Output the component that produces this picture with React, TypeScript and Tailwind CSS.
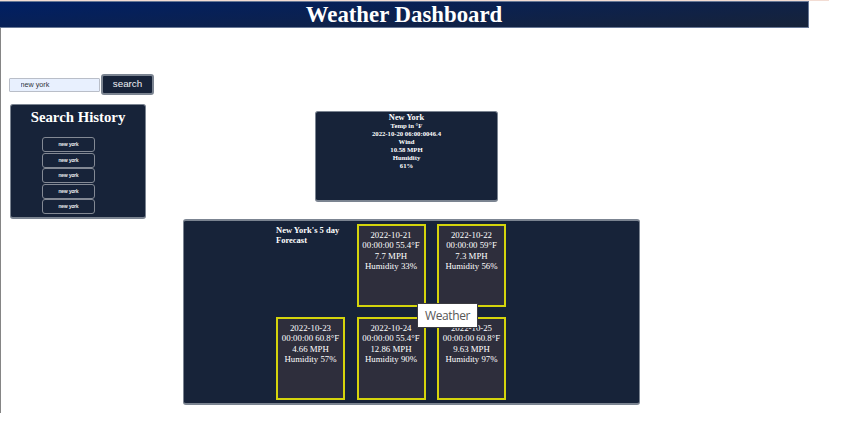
const history = ["new york", "new york", "new york", "new york", "new york"];

const current = [
  "Temp in °F",
  "2022-10-20 06:00:0046.4",
  "Wind",
  "10.58 MPH",
  "Humidity",
  "61%",
];

const forecast = [
  { date: "2022-10-21", temp: "00:00:00 55.4°F", wind: "7.7 MPH", humidity: "Humidity 33%" },
  { date: "2022-10-22", temp: "00:00:00 59°F", wind: "7.3 MPH", humidity: "Humidity 56%" },
  { date: "2022-10-23", temp: "00:00:00 60.8°F", wind: "4.66 MPH", humidity: "Humidity 57%" },
  { date: "2022-10-24", temp: "00:00:00 55.4°F", wind: "12.86 MPH", humidity: "Humidity 90%" },
  { date: "2022-10-25", temp: "00:00:00 60.8°F", wind: "9.63 MPH", humidity: "Humidity 97%" },
];

function SearchPanel() {
  return (
    <aside className="w-[146px] shrink-0">
      <form className="flex items-center gap-px" onSubmit={(e) => e.preventDefault()}>
        <input
          aria-label="City"
          defaultValue="new york"
          className="h-[14px] w-[91px] shrink-0 rounded-[1px] border border-[#b9bec8] bg-[#e8f0fe] pl-[10.5px] font-['Liberation_Sans',Arial,sans-serif] text-[7.2px] text-[#30343c] outline-none"
        />
        <button className="h-[21px] w-[53px] shrink-0 rounded-[3px] border-2 border-[#7b8491] bg-[#172339] pb-px font-['Liberation_Sans',Arial,sans-serif] text-[9.8px] leading-none text-[#eef0f3]">
          search
        </button>
      </form>
      <section className="ml-px mt-[9px] h-[115px] w-[136px] rounded-[3px] border border-b-2 border-[#7b8491] bg-[#172339]">
        <h2 className="mt-[3px] text-center text-[14.8px] font-bold leading-[18px] text-white">
          Search History
        </h2>
        <div className="ml-[31px] mt-[11px] flex w-[53px] flex-col gap-[0.5px]">
          {history.map((city, i) => (
            <button
              key={i}
              className="h-[15px] rounded-[3px] border-[1.5px] border-[#838994] bg-[#172339] font-['Liberation_Sans',Arial,sans-serif] text-[5px] leading-none text-white [-webkit-text-stroke:0.1px_white]"
            >
              {city}
            </button>
          ))}
        </div>
      </section>
    </aside>
  );
}

function CurrentWeather() {
  return (
    <section className="ml-[132px] h-[91px] w-[183px] rounded-[3px] border border-b-2 border-[#7b8491] bg-[#172339] text-center font-bold text-white">
      <h3 className="pt-px text-[8.4px] leading-[9px]">New York</h3>
      {current.map((line) => (
        <p key={line} className="text-[6.7px] leading-[8px]">
          {line}
        </p>
      ))}
    </section>
  );
}

function Forecast() {
  return (
    <section className="mt-[17px] h-[186px] w-[457px] rounded-[3px] border border-t-2 border-b-2 border-[#7b8491] bg-[#172339] pl-[92px] pt-[3px] text-white">
      <div className="grid w-[230px] grid-cols-[69px_69px_69px] grid-rows-[83px_83px] gap-x-[11.5px] gap-y-[10px]">
        <h3 className="whitespace-nowrap pt-px text-[8.5px] font-bold leading-[10px]">
          New York&apos;s 5 day
          <br />
          Forecast
        </h3>
        {forecast.map((day) => (
          <article
            key={day.date}
            className="flex flex-col items-center whitespace-nowrap border-2 border-[#d4d40c] bg-[#2e2e3c] pt-[4px] text-[8.8px] leading-[10.3px]"
          >
            <p>{day.date}</p>
            <p>{day.temp}</p>
            <p>{day.wind}</p>
            <p>{day.humidity}</p>
          </article>
        ))}
      </div>
    </section>
  );
}

export default function App() {
  return (
    <div className="relative h-[437px] w-[860px] overflow-hidden bg-white font-['Liberation_Serif','Times_New_Roman',serif]">
      <div className="h-px w-[829px] bg-[#f3ddd4]" />
      <div className="h-[412px] w-[829px] border-l border-[#858585]">
        <header className="-ml-px flex h-[27px] w-[809px] items-center justify-center border border-l-0 border-[#687896] bg-[linear-gradient(176.5deg,#001f64,#172339)]">
          <h1 className="text-[22.8px] font-bold leading-[26px] text-white">Weather Dashboard</h1>
        </header>
        <div className="flex pl-[8px] pt-[46px]">
          <SearchPanel />
          <main className="ml-[28px] pt-[37px]">
            <CurrentWeather />
            <Forecast />
          </main>
        </div>
      </div>
      <div
        role="tooltip"
        className="absolute left-[417px] top-[303px] flex h-[25px] w-[61px] items-center justify-center border border-[#3b3b40] bg-white font-['Open_Sans','Noto_Sans',sans-serif] text-[12px] tracking-[-0.4px] text-[#575757]"
      >
        Weather
      </div>
    </div>
  );
}
